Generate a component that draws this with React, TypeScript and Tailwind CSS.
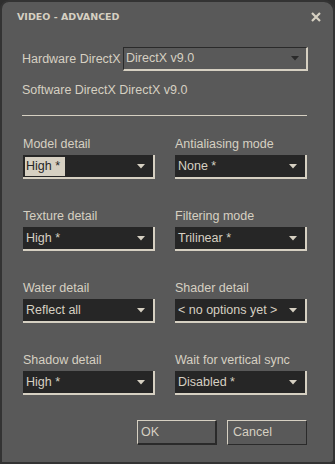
import React from "react";

const txt = "text-[#d6d0c2]";

function Arrow({ dark = false }: { dark?: boolean }) {
  return (
    <svg width="8" height="5" viewBox="0 0 8 5" className="shrink-0">
      <polygon points="0,0 8,0 4,4.5" fill={dark ? "#2a2a2a" : "#d6d0c2"} />
    </svg>
  );
}

function Select({ value, highlight = false }: { value: string; highlight?: boolean }) {
  return (
    <div className="h-[24px] bg-[#262626] border-b-2 border-r-2 border-b-[#d6d0c2] border-r-[#d6d0c2] flex items-center pr-[8px]">
      <div className="flex-1 pl-[2px] whitespace-nowrap">
        {highlight ? (
          <span className="inline-block bg-[#d6d0c2] text-[#262626] pl-[1px] pr-[5px] leading-[19px]">{value}</span>
        ) : (
          <span className={`${txt} pl-[1px]`}>{value}</span>
        )}
      </div>
      <Arrow />
    </div>
  );
}

function Field({ label, value, highlight }: { label: string; value: string; highlight?: boolean }) {
  return (
    <div className="flex flex-col">
      <div className={`${txt} h-[19px] leading-[16px] whitespace-nowrap`}>{label}</div>
      <Select value={value} highlight={highlight} />
    </div>
  );
}

export default function App() {
  return (
    <div className="w-[335px] h-[464px] bg-[#2e2e2e]" style={{ fontFamily: '"Liberation Sans", Arial, sans-serif' }}>
      <div className="w-[335px] h-[464px] bg-[#595959] border-[2px] border-[#333333] rounded-tl-[9px] rounded-tr-[11px] rounded-br-[5px] flex flex-col text-[12.5px]">
        <div className="flex items-center justify-between pl-[15px] pr-[12px] pt-[6px] h-[24px]">
          <span className="text-[#d6d0c2] font-bold text-[9.5px] tracking-[0px]" style={{ fontFamily: '"DejaVu Sans", sans-serif' }}>VIDEO - ADVANCED</span>
          <svg width="10" height="10" viewBox="0 0 10 10">
            <path d="M1 1 L9 9 M9 1 L1 9" stroke="#d6d0c2" strokeWidth="2.2" />
          </svg>
        </div>
        <div className="pl-[20px] pr-[26px] pt-[21px]">
          <div className="flex items-center h-[24px]">
            <span className={`${txt} w-[101px] whitespace-nowrap`}>Hardware DirectX</span>
            <div className="flex-1 h-[24px] border border-[#2a2a2a] border-b-[#d6d0c2] border-r-[#d6d0c2] border-b-2 border-r-2 flex items-center pl-[2px] pr-[7px] -mr-[1px]">
              <span className={`${txt} flex-1`}>DirectX v9.0</span>
              <Arrow dark />
            </div>
          </div>
          <div className={`${txt} mt-[11px] leading-[16px]`}>Software DirectX DirectX v9.0</div>
          <div className="mt-[17px] h-[1px] bg-[#d6d0c2]" />
          <div className="grid grid-cols-2 gap-x-[20px] gap-y-[29px] mt-[20px] pl-[1px]">
            <Field label="Model detail" value="High *" highlight />
            <Field label="Antialiasing mode" value="None *" />
            <Field label="Texture detail" value="High *" />
            <Field label="Filtering mode" value="Trilinear *" />
            <Field label="Water detail" value="Reflect all" />
            <Field label="Shader detail" value="< no options yet >" />
            <Field label="Shadow detail" value="High *" />
            <Field label="Wait for vertical sync" value="Disabled *" />
          </div>
          <div className="flex justify-end gap-[10px] mt-[25px]">
            <div className={`${txt} w-[80px] h-[25px] border border-[#d6d0c2] border-b-[#2a2a2a] border-r-[#2a2a2a] border-b-2 border-r-2 flex items-center pl-[3px]`}>OK</div>
            <div className={`${txt} w-[80px] h-[25px] border border-[#d6d0c2] border-b-[#2a2a2a] border-r-[#2a2a2a] flex items-center pl-[5px]`}>Cancel</div>
          </div>
        </div>
      </div>
    </div>
  );
}
